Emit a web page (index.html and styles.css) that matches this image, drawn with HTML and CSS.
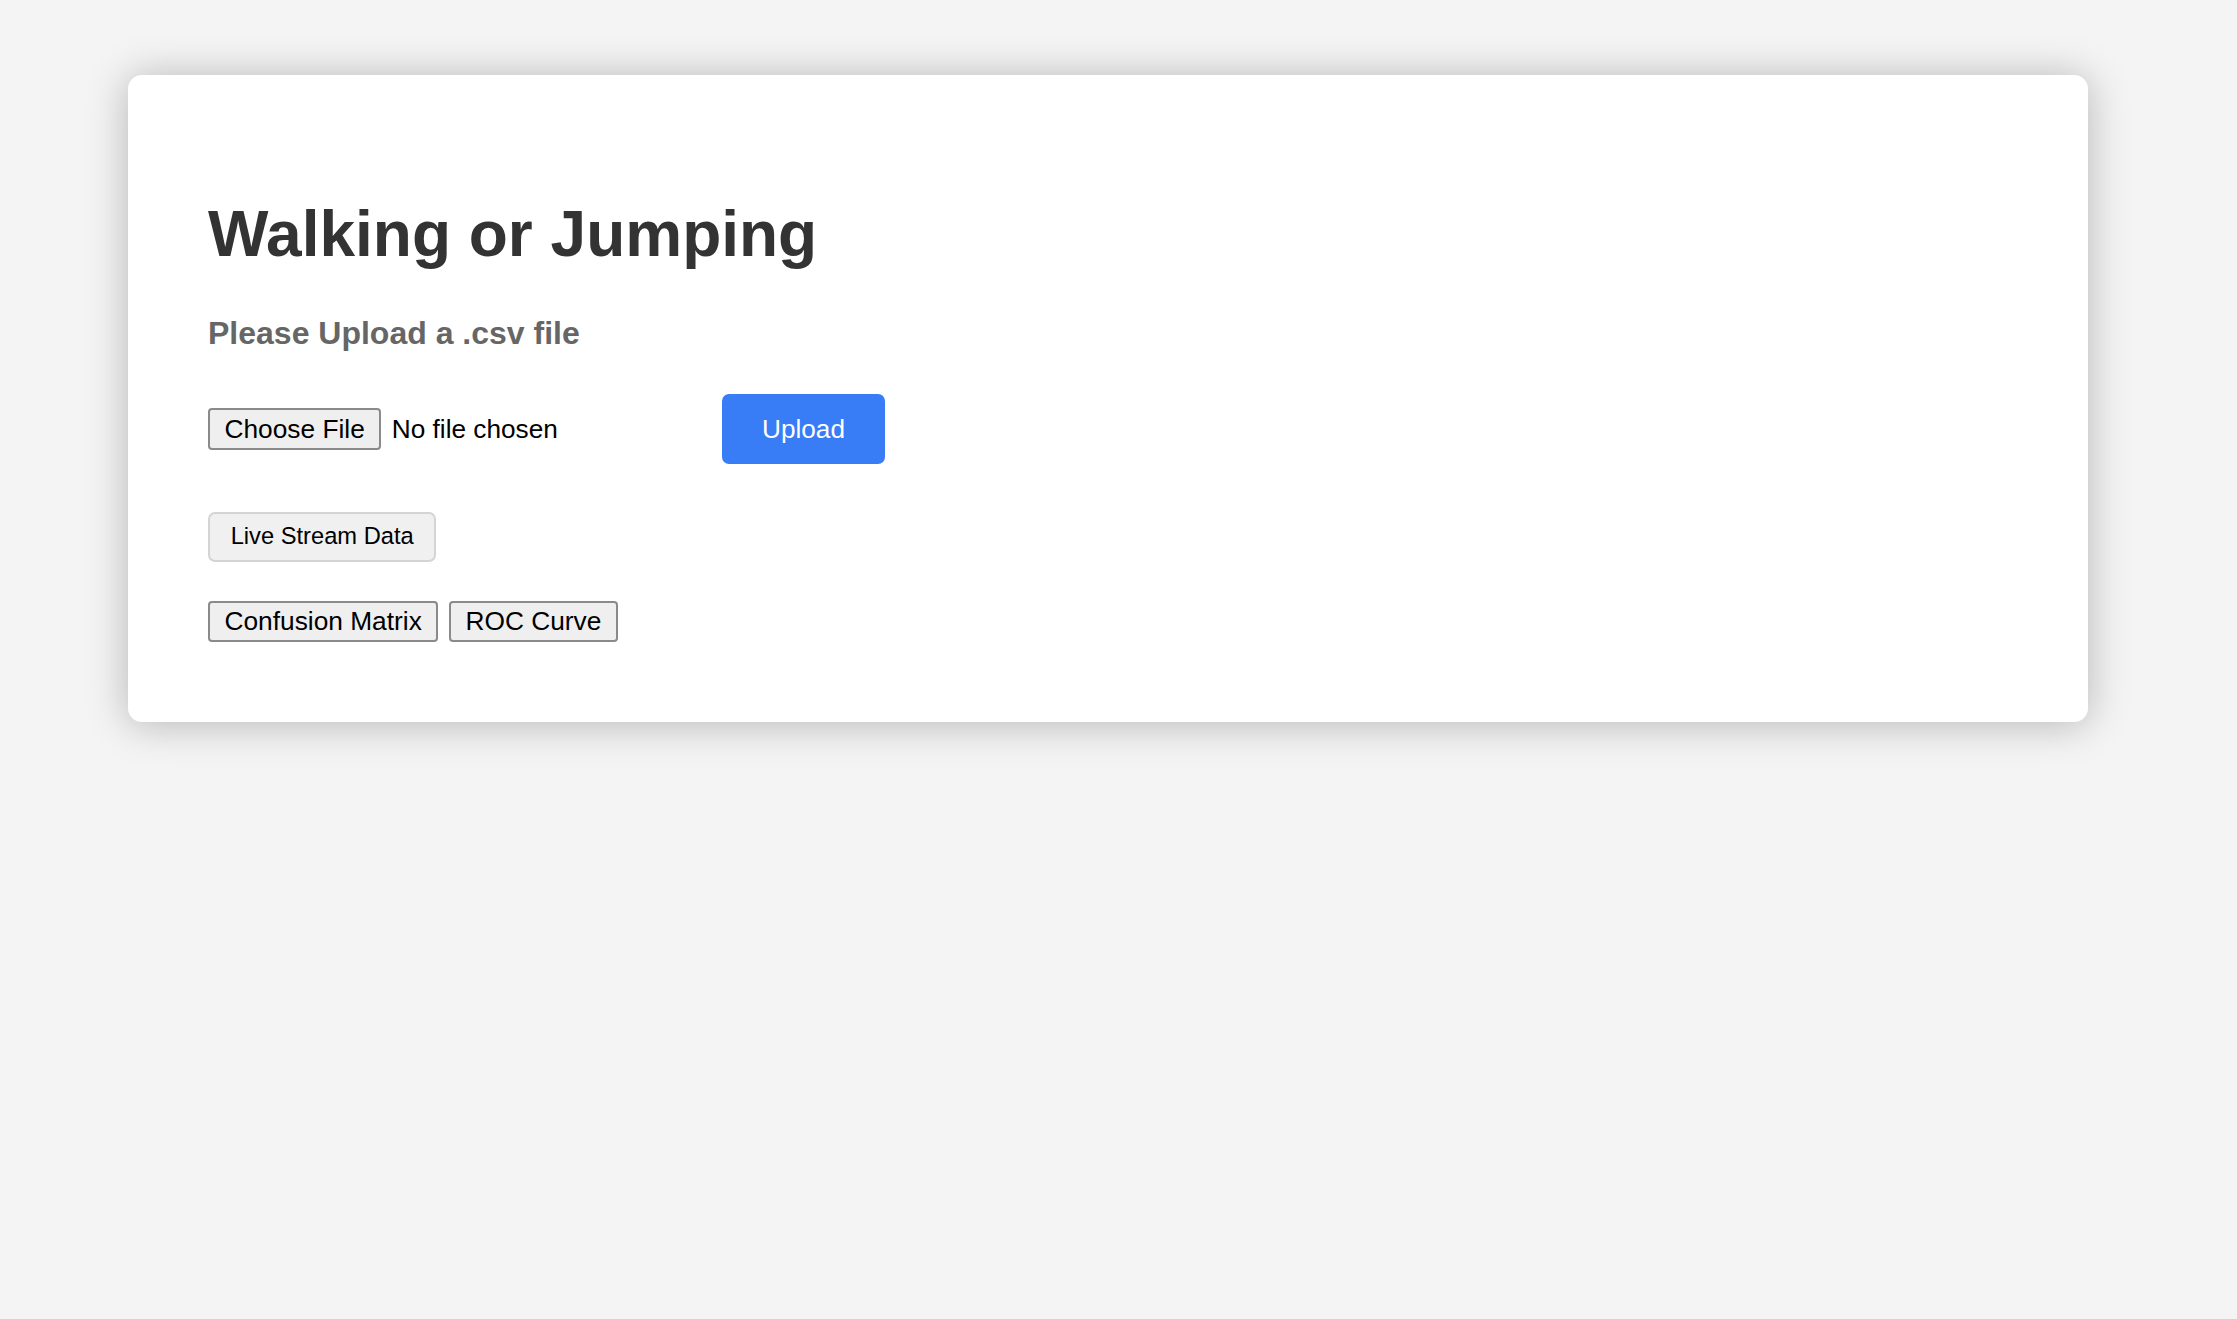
FILE: index.html
```html
<!DOCTYPE html>
<html lang="en">
<head>
<meta charset="utf-8">
<title>Walking or Jumping</title>
<link rel="stylesheet" href="styles.css">
</head>
<body>
<main class="card">
  <h1 class="title">Walking or Jumping</h1>
  <h3 class="subtitle">Please Upload a .csv file</h3>
  <form class="upload-row">
    <div class="file-field">
      <label class="sys-btn" for="csv">Choose File</label>
      <input id="csv" class="file-hidden" type="file" accept=".csv">
      <span class="file-name">No file chosen</span>
    </div>
    <button type="button" class="upload-btn">Upload</button>
  </form>
  <div class="stream-row">
    <button type="button" class="stream-btn">Live Stream Data</button>
  </div>
  <div class="plot-row">
    <button type="button" class="sys-btn">Confusion Matrix</button>
    <button type="button" class="sys-btn">ROC Curve</button>
  </div>
</main>
</body>
</html>
```

FILE: styles.css
```css
html, body {
  margin: 0;
  padding: 0;
}

body {
  background: #f4f4f4;
  font-family: "Liberation Sans", Arial, Helvetica, sans-serif;
  min-height: 1319px;
  padding-top: 75px;
  box-sizing: border-box;
}

.card {
  margin-left: 128px;
  width: 1960px;
  box-sizing: border-box;
  background: #ffffff;
  border-radius: 14px;
  box-shadow: 0 2px 40px rgba(0, 0, 0, 0.26);
  padding: 80px 80px 80px 80px;
  display: flex;
  flex-direction: column;
  align-items: flex-start;
}

.title {
  margin: 43px 0 43px 0;
  font-size: 64px;
  line-height: 1.15;
  font-weight: 700;
  color: #333333;
}

.subtitle {
  margin: 0;
  font-size: 32px;
  line-height: 1.15;
  font-weight: 700;
  color: #666666;
}

.upload-row {
  margin: 42.7px 0 0 0;
  display: flex;
  align-items: center;
}

.file-field {
  width: 514px;
  display: flex;
  align-items: center;
}

.file-hidden {
  display: none;
}

.sys-btn {
  font-family: "Liberation Sans", Arial, Helvetica, sans-serif;
  font-size: 26.3px;
  line-height: 1.15;
  color: #000000;
  background: #efefef;
  border: 2px solid #8a8a8a;
  border-radius: 4px;
  padding: 3.7px 14.5px;
  cursor: default;
  display: inline-block;
}

.file-name {
  margin-left: 10.5px;
  font-size: 26.2px;
  line-height: 1.15;
  color: #000000;
}

.upload-btn {
  font-family: "Liberation Sans", Arial, Helvetica, sans-serif;
  font-size: 26.2px;
  line-height: 1.15;
  color: #ffffff;
  background: #387cf6;
  border: none;
  border-radius: 7px;
  padding: 20px 40px;
}

.stream-row {
  margin-top: 47.4px;
}

.stream-btn {
  font-family: "Liberation Sans", Arial, Helvetica, sans-serif;
  font-size: 23.7px;
  line-height: 1.15;
  color: #000000;
  background: #f0f0f0;
  border: 2px solid #d4d4d4;
  border-radius: 7px;
  padding: 9.5px 20.7px;
}

.plot-row {
  margin-top: 38.7px;
  display: flex;
  gap: 10.7px;
}
```
